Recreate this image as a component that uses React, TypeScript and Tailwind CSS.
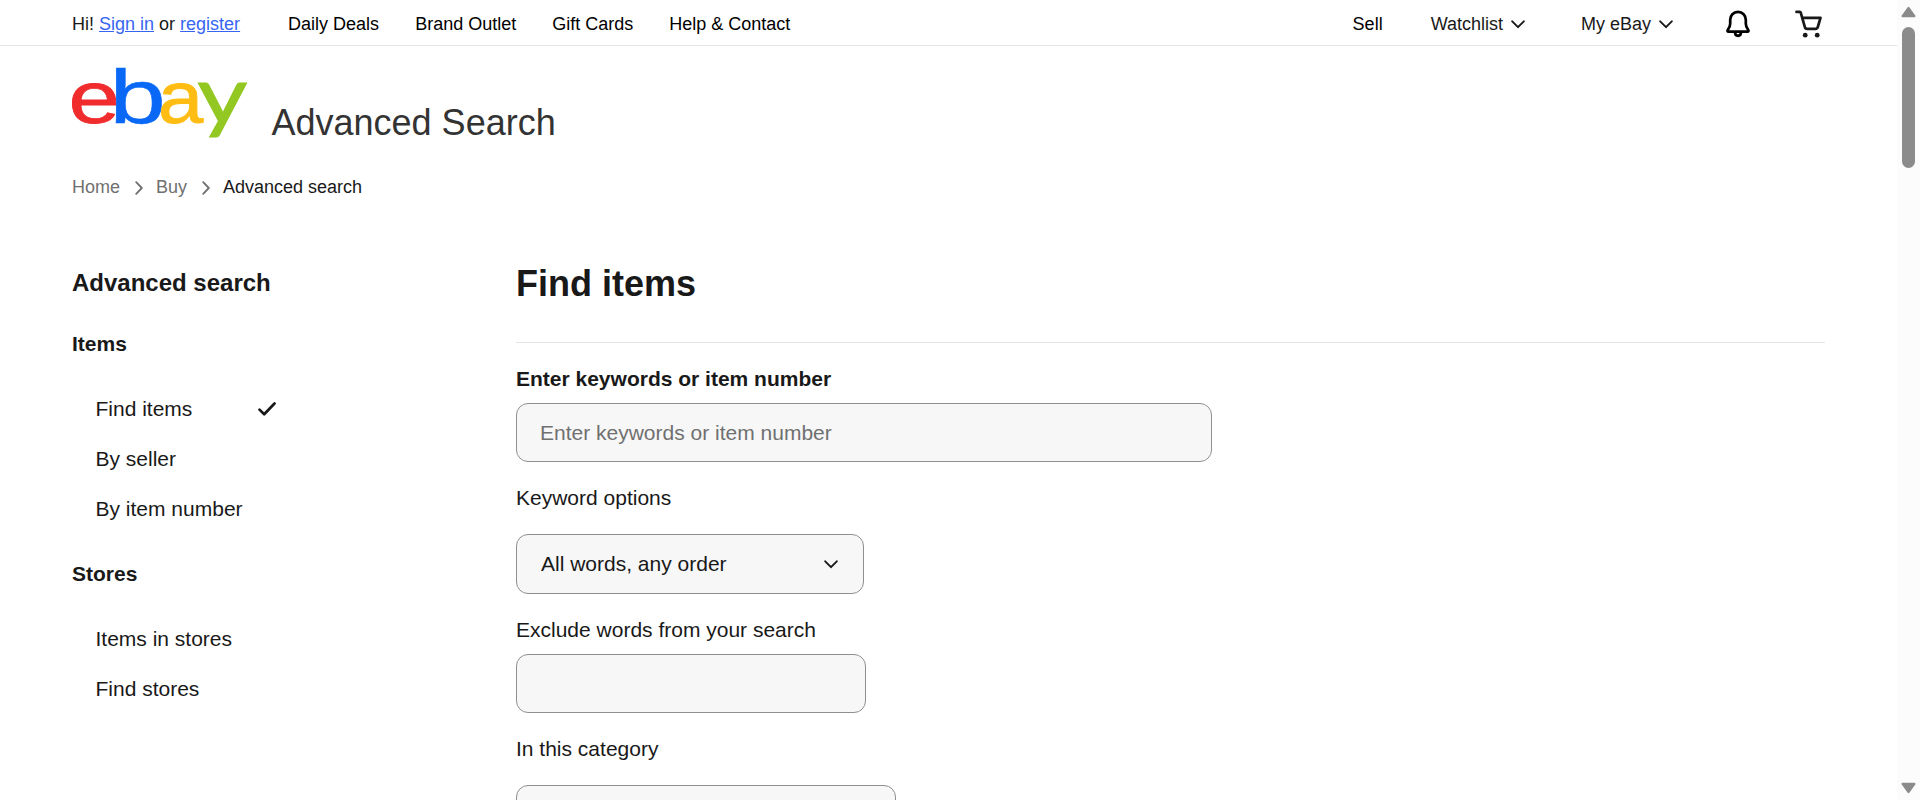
import React from "react";

const topLinks = ["Daily Deals", "Brand Outlet", "Gift Cards", "Help & Contact"];

function ChevronDown({ className = "" }: { className?: string }) {
  return (
    <svg className={className} width="14" height="9" viewBox="0 0 14 9" fill="none" stroke="#191919" strokeWidth="1.9" strokeLinecap="round" strokeLinejoin="round">
      <path d="M1.2 1.3 7 7.2l5.8-5.9" />
    </svg>
  );
}

function ChevronRight() {
  return (
    <svg width="8" height="14" viewBox="0 0 8 14" fill="none" stroke="#707070" strokeWidth="1.8" strokeLinecap="round" strokeLinejoin="round">
      <path d="M1.2 1.2 6.8 7l-5.6 5.8" />
    </svg>
  );
}

function Bell() {
  return (
    <svg width="24" height="28" viewBox="0 0 24 28" fill="none" stroke="#000" strokeWidth="2.7" strokeLinejoin="round">
      <path d="M12 1.9c-4.600 0-7.800 3.500-7.800 7.900v3.900c0 2.500-1 4.200-2.300 6.100-.7 1.100-.4 1.900.7 1.900h18.800c1.100 0 1.400-.8.7-1.900-1.300-1.900-2.300-3.600-2.300-6.100V9.800c0-4.400-3.200-7.900-7.800-7.900Z" />
      <path d="M9 22.300c0 2.200 1.300 3.500 3 3.500s3-1.300 3-3.500" />
    </svg>
  );
}

function Cart() {
  return (
    <svg width="28" height="28" viewBox="0 0 28 28" fill="none" stroke="#191919" strokeWidth="2.700" strokeLinecap="round" strokeLinejoin="round">
      <path d="M1.500 1.900h3.200c.6 0 .9.300 1.100.9l4 14.100c.3 1.300 1.100 1.900 2.300 1.900h8.400c1.200 0 2-.6 2.300-1.800l2.700-9.200H7.300" />
      <circle cx="10.200" cy="25.200" r="2.400" fill="#191919" stroke="none" />
      <circle cx="22.200" cy="25.200" r="2.400" fill="#191919" stroke="none" />
    </svg>
  );
}

function Logo() {
  return (
    <svg width="177" height="72" viewBox="0 0 177 72" className="block overflow-visible">
      <g fontFamily="Liberation Sans, Arial, sans-serif" fontSize="76">
        <text transform="translate(-2.500 57) scale(1.22 .98)" fill="#f12c2d" stroke="#f12c2d" strokeWidth=".8">e</text>
        <text transform="translate(38.500 57) scale(1.33 1.01)" fill="#0968f6" stroke="#0968f6" strokeWidth=".5">b</text>
        <text transform="translate(87 57) scale(1.07 .98)" fill="#ffbd14" stroke="#ffbd14" strokeWidth=".9">a</text>
      </g>
      <text transform="translate(126.200 57) scale(1.23 1)" fontFamily="Lato, sans-serif" fontSize="79" fill="#92c821" stroke="#92c821" strokeWidth=".9">y</text>
    </svg>
  );
}

function TopBar() {
  return (
    <header className="flex h-[46px] items-center border-b border-[#e5e5e5] pt-[3px] pr-[74px] pl-[72px] text-lg leading-[21px]">
      <p>
        Hi! <a className="text-[#3665f3] underline">Sign in</a> or <a className="text-[#3665f3] underline">register</a>
      </p>
      <nav className="ml-12 flex gap-9 text-black">
        {topLinks.map((t) => (
          <a key={t}>{t}</a>
        ))}
      </nav>
      <div className="ml-auto flex items-center">
        <a className="text-black">Sell</a>
        <a className="ml-12 flex items-center">
          Watchlist <ChevronDown className="ml-2" />
        </a>
        <a className="ml-14 flex items-center">
          My eBay <ChevronDown className="ml-2" />
        </a>
        <div className="ml-[53px]"><Bell /></div>
        <div className="ml-[45px]"><Cart /></div>
      </div>
    </header>
  );
}

function SideGroup({ title, items, selected }: { title: string; items: string[]; selected?: string }) {
  return (
    <section>
      <h3 className="font-bold">{title}</h3>
      <ul className="mt-[41px] flex flex-col gap-[26px] pl-[23.5px]">
        {items.map((t) => (
          <li key={t} className="flex w-[180.5px] items-center justify-between">
            {t}
            {t === selected && (
              <svg width="18" height="14" viewBox="0 0 18 14" fill="none" stroke="#191919" strokeWidth="2.700" strokeLinecap="round" strokeLinejoin="round">
                <path d="M1.500 7.600 6.200 12.200 16.500 1.500" />
              </svg>
            )}
          </li>
        ))}
      </ul>
    </section>
  );
}

function ScrollBar() {
  return (
    <div className="flex w-[23px] shrink-0 flex-col items-center bg-[#fcfcfc] pt-[6px] pb-[6px]">
      <svg width="15" height="12" viewBox="0 0 15 12" fill="#8b8b8b" stroke="#8b8b8b" strokeWidth="2" strokeLinejoin="round">
        <path d="M7.500 1.800 13.500 10.200h-12Z" />
      </svg>
      <div className="mt-[9px] h-[141px] w-[13px] rounded-full bg-[#8b8b8b]" />
      <svg className="mt-auto" width="15" height="12" viewBox="0 0 15 12" fill="#8b8b8b" stroke="#8b8b8b" strokeWidth="2" strokeLinejoin="round">
        <path d="M7.500 10.200 13.500 1.800h-12Z" />
      </svg>
    </div>
  );
}

export default function App() {
  return (
    <div className="flex h-[800px] overflow-hidden bg-white font-['Liberation_Sans',Arial,sans-serif] text-[21px] leading-6 text-[#191919]">
      <div className="min-w-0 flex-1">
        <TopBar />
        <div className="flex h-[99px] items-start pt-[20px] pl-[71px]">
          <Logo />
          <h1 className="mt-[37px] ml-[23.500px] text-4xl leading-10 text-[#333]">Advanced Search</h1>
        </div>
        <nav className="mt-[32px] flex items-center pl-[72px] text-lg leading-[21px]">
          <a className="w-[63px] text-[#707070]">Home</a>
          <ChevronRight />
          <a className="ml-[13px] w-[46px] text-[#707070]">Buy</a>
          <ChevronRight />
          <span className="ml-[13px]">Advanced search</span>
        </nav>
        <div className="flex pr-[72px] pl-[72px]">
          <aside className="w-[444px] shrink-0 pt-[71px]">
            <h2 className="mb-[35px] text-2xl leading-7 font-bold">Advanced search</h2>
            <div className="flex flex-col gap-[41px]">
              <SideGroup title="Items" items={["Find items", "By seller", "By item number"]} selected="Find items" />
              <SideGroup title="Stores" items={["Items in stores", "Find stores"]} />
            </div>
          </aside>
          <main className="min-w-0 flex-1 pt-[66px]">
            <h2 className="text-4xl leading-10 font-bold">Find items</h2>
            <hr className="mt-[38px] border-[#e5e5e5]" />
            <label className="mt-6 block font-bold">Enter keywords or item number</label>
            <input
              className="mt-3 block h-[59px] w-[696px] rounded-xl border border-[#8f8f8f] bg-[#f7f7f7] px-[23px] placeholder:text-[#707070]"
              placeholder="Enter keywords or item number"
            />
            <label className="mt-6 block">Keyword options</label>
            <div className="mt-6 flex h-[60px] w-[348px] items-center justify-between rounded-xl border border-[#8f8f8f] bg-[#f7f7f7] pr-[25px] pl-6">
              All words, any order
              <ChevronDown />
            </div>
            <label className="mt-6 block">Exclude words from your search</label>
            <input className="mt-3 block h-[59px] w-[350px] rounded-xl border border-[#8f8f8f] bg-[#f7f7f7] px-[23px]" />
            <label className="mt-6 block">In this category</label>
            <div className="mt-6 h-[60px] w-[380px] rounded-xl border border-[#8f8f8f] bg-[#f7f7f7]" />
          </main>
        </div>
      </div>
      <ScrollBar />
    </div>
  );
}
